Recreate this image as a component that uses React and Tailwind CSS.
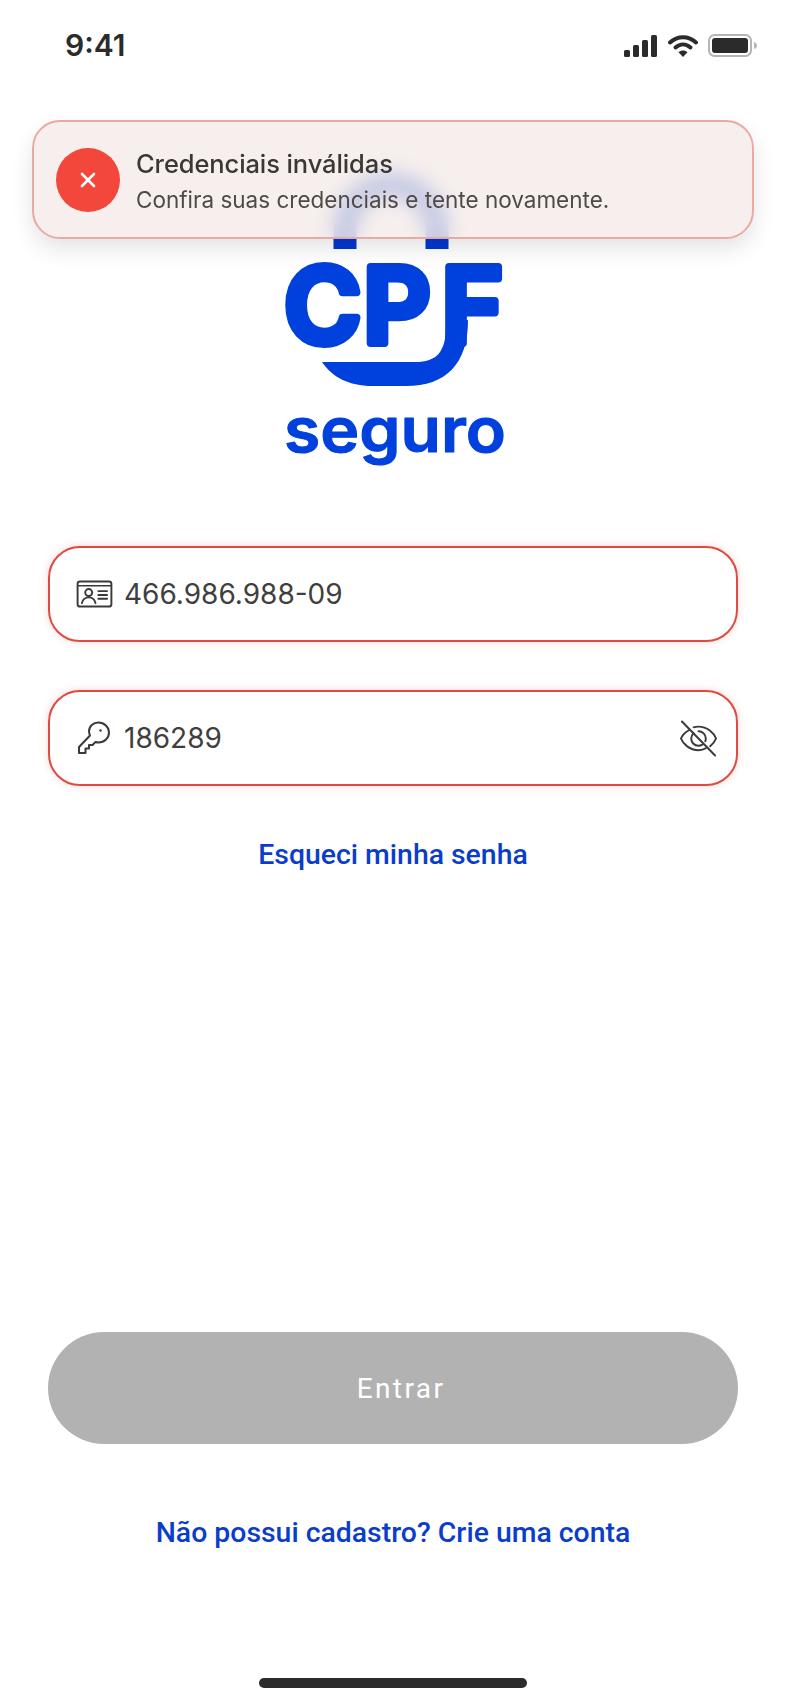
const inter = "font-['Inter',sans-serif]";
const roboto = "font-['Roboto',sans-serif]";

const StatusIcons = () => (
  <div className="flex items-center">
    <svg width="34" height="22" viewBox="0 0 34 22" fill="#2b2b2b">
      <rect x="0" y="15" width="6" height="7" rx="1.5" />
      <rect x="9" y="10" width="6" height="12" rx="1.5" />
      <rect x="18" y="5" width="6" height="17" rx="1.5" />
      <rect x="27" y="0" width="6" height="22" rx="1.5" />
    </svg>
    <svg className="ml-[10px]" width="30" height="23" viewBox="0 0 30 23" fill="none">
      <path d="M2 8.5C9.5 1.5 20.5 1.5 28 8.5" stroke="#2b2b2b" strokeWidth="4" strokeLinecap="round" />
      <path d="M7.5 13.5C12 9.5 18 9.5 22.5 13.5" stroke="#2b2b2b" strokeWidth="4" strokeLinecap="round" />
      <path d="M15 23L10.5 18.2C13 16 17 16 19.5 18.2Z" fill="#2b2b2b" />
    </svg>
    <svg className="ml-[10px]" width="50" height="23" viewBox="0 0 50 23" fill="none">
      <rect x="1" y="1" width="42" height="21" rx="5.5" stroke="#b5b5b5" strokeWidth="2" />
      <rect x="4" y="4" width="36" height="15" rx="3" fill="#2b2b2b" />
      <path d="M46 8C48 8.5 49 10 49 11.5C49 13 48 14.5 46 15Z" fill="#b5b5b5" />
    </svg>
  </div>
);

const Logo = () => (
  <svg className="mx-auto block" width="236" height="300" viewBox="275 170 236 300" fill="#0040dc">
    <path d="M345 249V231a46 46 0 0 1 92 0V249" fill="none" stroke="#0038d0" strokeWidth="23" />
    <text
      x="284 363 441.5"
      y="343"
      fontFamily="Inter"
      fontWeight="600"
      fontSize="105"
      stroke="#0040dc"
      strokeWidth="8"
      strokeLinejoin="round"
    >
      CPF
    </text>
    <path d="M446 325C446 352 437 362 415 362H322C332 377 349 386 372 386H406C446 386 468 364 468 320Z" />
    <text
      x="284"
      y="452"
      fontFamily="Inter"
      fontWeight="600"
      fontSize="62"
      textLength="222"
      lengthAdjust="spacingAndGlyphs"
      stroke="#0040dc"
      strokeWidth="1"
      strokeLinejoin="round"
    >
      seguro
    </text>
  </svg>
);

const IdCardIcon = () => (
  <svg width="37" height="28" viewBox="0 0 38 29" fill="none" stroke="#3a3a3a" strokeWidth="2" strokeLinecap="round" strokeLinejoin="round">
    <rect x="1.5" y="1.5" width="35" height="26" rx="2.5" />
    <path d="M1.5 6H36.5" strokeWidth="1.4" />
    <circle cx="13" cy="13" r="3.6" />
    <path d="M6 24c.8-4 3.6-6 7-6s6.2 2 7 6" />
    <path d="M23 11.5H32M23 15.5H32M23 19.5H32" />
  </svg>
);

const KeyIcon = () => (
  <svg width="34" height="34" viewBox="0 0 34 34" fill="none" stroke="#3a3a3a" strokeWidth="2" strokeLinecap="round" strokeLinejoin="round">
    <path d="M2 32V26L13 14.5C12.4 12.8 12 11.6 12 10.5C12 5.3 16.2 1.5 21.5 1.5C27.2 1.5 32 6 32 11.5C32 17 27.5 21.5 21.5 21.5C20.5 21.5 19.5 21.3 18.5 21L15.5 24H12V27.5H8.5V32Z" />
    <circle cx="23.5" cy="9.5" r="1.2" fill="#3a3a3a" stroke="none" />
  </svg>
);

const EyeOffIcon = () => (
  <svg width="37" height="37" viewBox="0 0 38 38" fill="none" stroke="#3a3a3a" strokeWidth="2" strokeLinecap="round" strokeLinejoin="round">
    <path d="M2 1.5L36 36.5" />
    <path d="M9 10.5C5 13 2 16.5 1 19C3 24.5 10 31 19 31C22 31 24.5 30.3 26.5 29" />
    <path d="M14 7.5C15.5 7 17.2 6.8 19 6.8C28 6.8 35 13.5 37 19C36 21.5 34 24.5 31 27" />
    <path d="M14 13.5C12.5 15 11.5 17 11.5 19C11.5 23.3 15 26.5 19 26.5C20.5 26.5 21.8 26 23 25.4" />
    <path d="M19 11.5C23.2 11.5 26.5 14.8 26.5 19C26.5 20 26.3 21 26 21.8" />
  </svg>
);

const Field = ({ icon, value, trailing }) => (
  <div className="flex h-[96px] items-center rounded-[32px] border-2 border-[#de4b40] bg-white pl-[25px] pr-[19px] shadow-[0_0_8px_rgba(224,74,63,0.22)]">
    <div className="flex w-[38px] justify-center">{icon}</div>
    <span className={`ml-[11px] flex-1 text-[28px] text-[#3f3f3f] ${inter}`}>{value}</span>
    {trailing}
  </div>
);

const App = () => {
  return (
    <div className="relative flex h-[1704px] w-[786px] flex-col overflow-hidden bg-white">
      <header className="flex h-[90px] items-start justify-between pl-[65px] pr-[28px] pt-[28px]">
        <span className={`text-[30px] leading-[35px] font-semibold text-[#2b2b2b] ${inter}`}>9:41</span>
        <div className="pt-[6px]">
          <StatusIcons />
        </div>
      </header>

      {/* toast fica por cima do logo */}
      <div className="absolute left-[32px] top-[120px] flex h-[119px] w-[722px] items-center rounded-[28px] border-2 border-[#eca8a2] bg-[#f4ebe9]/80 pl-[22px] shadow-[0_10px_22px_rgba(0,0,0,0.11)] backdrop-blur-[10px]">
        <div className="flex h-[64px] w-[64px] items-center justify-center rounded-full bg-[#f2473a]">
          <svg width="18" height="18" viewBox="0 0 18 18" fill="none" stroke="#fff" strokeWidth="2.6" strokeLinecap="round">
            <path d="M3 3L15 15M15 3L3 15" />
          </svg>
        </div>
        <div className={`ml-[16px] flex flex-col pt-[4px] ${inter}`}>
          <span className="text-[25.5px] leading-[36px] font-medium tracking-[-0.1px] text-[#3b3735]">Credenciais inválidas</span>
          <span className="text-[22.5px] leading-[36px] text-[#4f4a48]">Confira suas credenciais e tente novamente.</span>
        </div>
      </div>

      <div className="mt-[80px]">
        <Logo />
      </div>

      <form className="mt-[76px] flex flex-1 flex-col px-[48px] pb-[16px]">
        <div className="flex flex-col gap-[48px]">
          <Field icon={<IdCardIcon />} value="466.986.988-09" />
          <Field icon={<KeyIcon />} value="186289" trailing={<EyeOffIcon />} />
        </div>
        <a className={`mt-[51px] text-center text-[28.4px] leading-[36px] font-medium text-[#0a3dcc] ${roboto}`}>
          Esqueci minha senha
        </a>
        <button
          type="button"
          className={`mt-auto h-[112px] rounded-[56px] bg-[#b2b2b2] pl-[16px] pt-[1px] text-[28px] tracking-[2.4px] text-white ${roboto}`}
        >
          Entrar
        </button>
        <a className={`mt-[71px] text-center text-[28.4px] leading-[36px] font-medium text-[#0a3dcc] ${roboto}`}>
          Não possui cadastro? Crie uma conta
        </a>
        <div className="mx-auto mt-[127px] h-[10px] w-[268px] rounded-full bg-[#2b2b2b]" />
      </form>
    </div>
  );
};

export default App;
